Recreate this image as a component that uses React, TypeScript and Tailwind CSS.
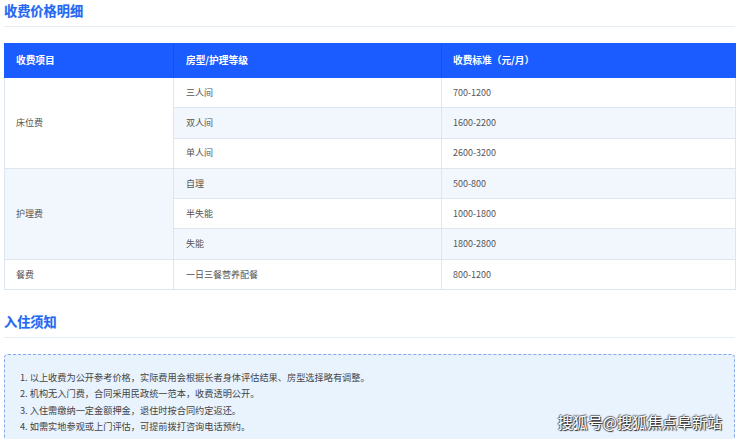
const font = { fontFamily: '"Noto Sans CJK SC", "Noto Sans", sans-serif' };

const rows = [
  { group: '床位费', span: 3, level: '三人间', price: '700-1200' },
  { level: '双人间', price: '1600-2200' },
  { level: '单人间', price: '2600-3200' },
  { group: '护理费', span: 3, level: '自理', price: '500-800' },
  { level: '半失能', price: '1000-1800' },
  { level: '失能', price: '1800-2800' },
  { group: '餐费', span: 1, level: '一日三餐营养配餐', price: '800-1200' },
];

const notes = [
  '1. 以上收费为公开参考价格，实际费用会根据长者身体评估结果、房型选择略有调整。',
  '2. 机构无入门费，合同采用民政统一范本，收费透明公开。',
  '3. 入住需缴纳一定金额押金，退住时按合同约定返还。',
  '4. 如需实地参观或上门评估，可提前拨打咨询电话预约。',
];

function SectionTitle({ children }: { children: string }) {
  return (
    <div className="border-b border-[#e6ecf3] pb-[7px]">
      <h2 className="text-[13.2px] leading-[17px] font-bold text-[#2468f2] [text-shadow:0_0_1px_rgba(36,104,242,0.35)]">
        {children}
      </h2>
    </div>
  );
}

export default function App() {
  return (
    <div className="relative h-[439px] w-[740px] overflow-hidden bg-white pl-[4px] pr-[5px] pt-[2px]" style={font}>
      <SectionTitle>收费价格明细</SectionTitle>

      <table className="mt-[16px] w-[731px] table-fixed border-collapse border border-[#dde6f0] text-[9px] text-[#555]">
        <colgroup>
          <col className="w-[169px]" />
          <col className="w-[268px]" />
          <col className="w-[294px]" />
        </colgroup>
        <thead>
          <tr className="h-[34px] bg-[#1a5cff] text-left text-[9.7px] font-bold text-white">
            <th className="border border-[#1a5cff] border-r-[#1552e6] pl-[11px]">收费项目</th>
            <th className="border border-[#1a5cff] border-r-[#1552e6] pl-[12px]">房型/护理等级</th>
            <th className="border border-[#1a5cff] pl-[11px]">收费标准（元/月）</th>
          </tr>
        </thead>
        <tbody>
          {rows.map((r, i) => (
            <tr key={r.level} className={i % 2 === 1 ? 'h-[30.3px] bg-[#f2f7fd]' : 'h-[30.3px] bg-white'}>
              {r.group && (
                <td rowSpan={r.span} className="border border-[#dde6f0] pl-[11px]">
                  {r.group}
                </td>
              )}
              <td className="border border-[#dde6f0] pl-[12px]">{r.level}</td>
              <td className="border border-[#dde6f0] pl-[11px]">{r.price}</td>
            </tr>
          ))}
        </tbody>
      </table>

      <div className="mt-[23px]">
        <SectionTitle>入住须知</SectionTitle>
      </div>

      <div className="mt-[16px] w-[731px] rounded-[4px] border border-dashed border-[#86a9ee] bg-[#e9f3fe] pb-[14px] pl-[15px] pt-[14px] text-[9.2px] leading-[16.4px] text-[#444]">
        {notes.map((n) => (
          <p key={n}>{n}</p>
        ))}
      </div>

      <div className="absolute right-[18px] top-[412px] text-[15px] leading-[20px] text-white [text-shadow:1px_1px_1px_#222,-1px_0_1px_#666,0_-1px_1px_#666]">
        搜狐号@搜狐焦点阜新站
      </div>
    </div>
  );
}
